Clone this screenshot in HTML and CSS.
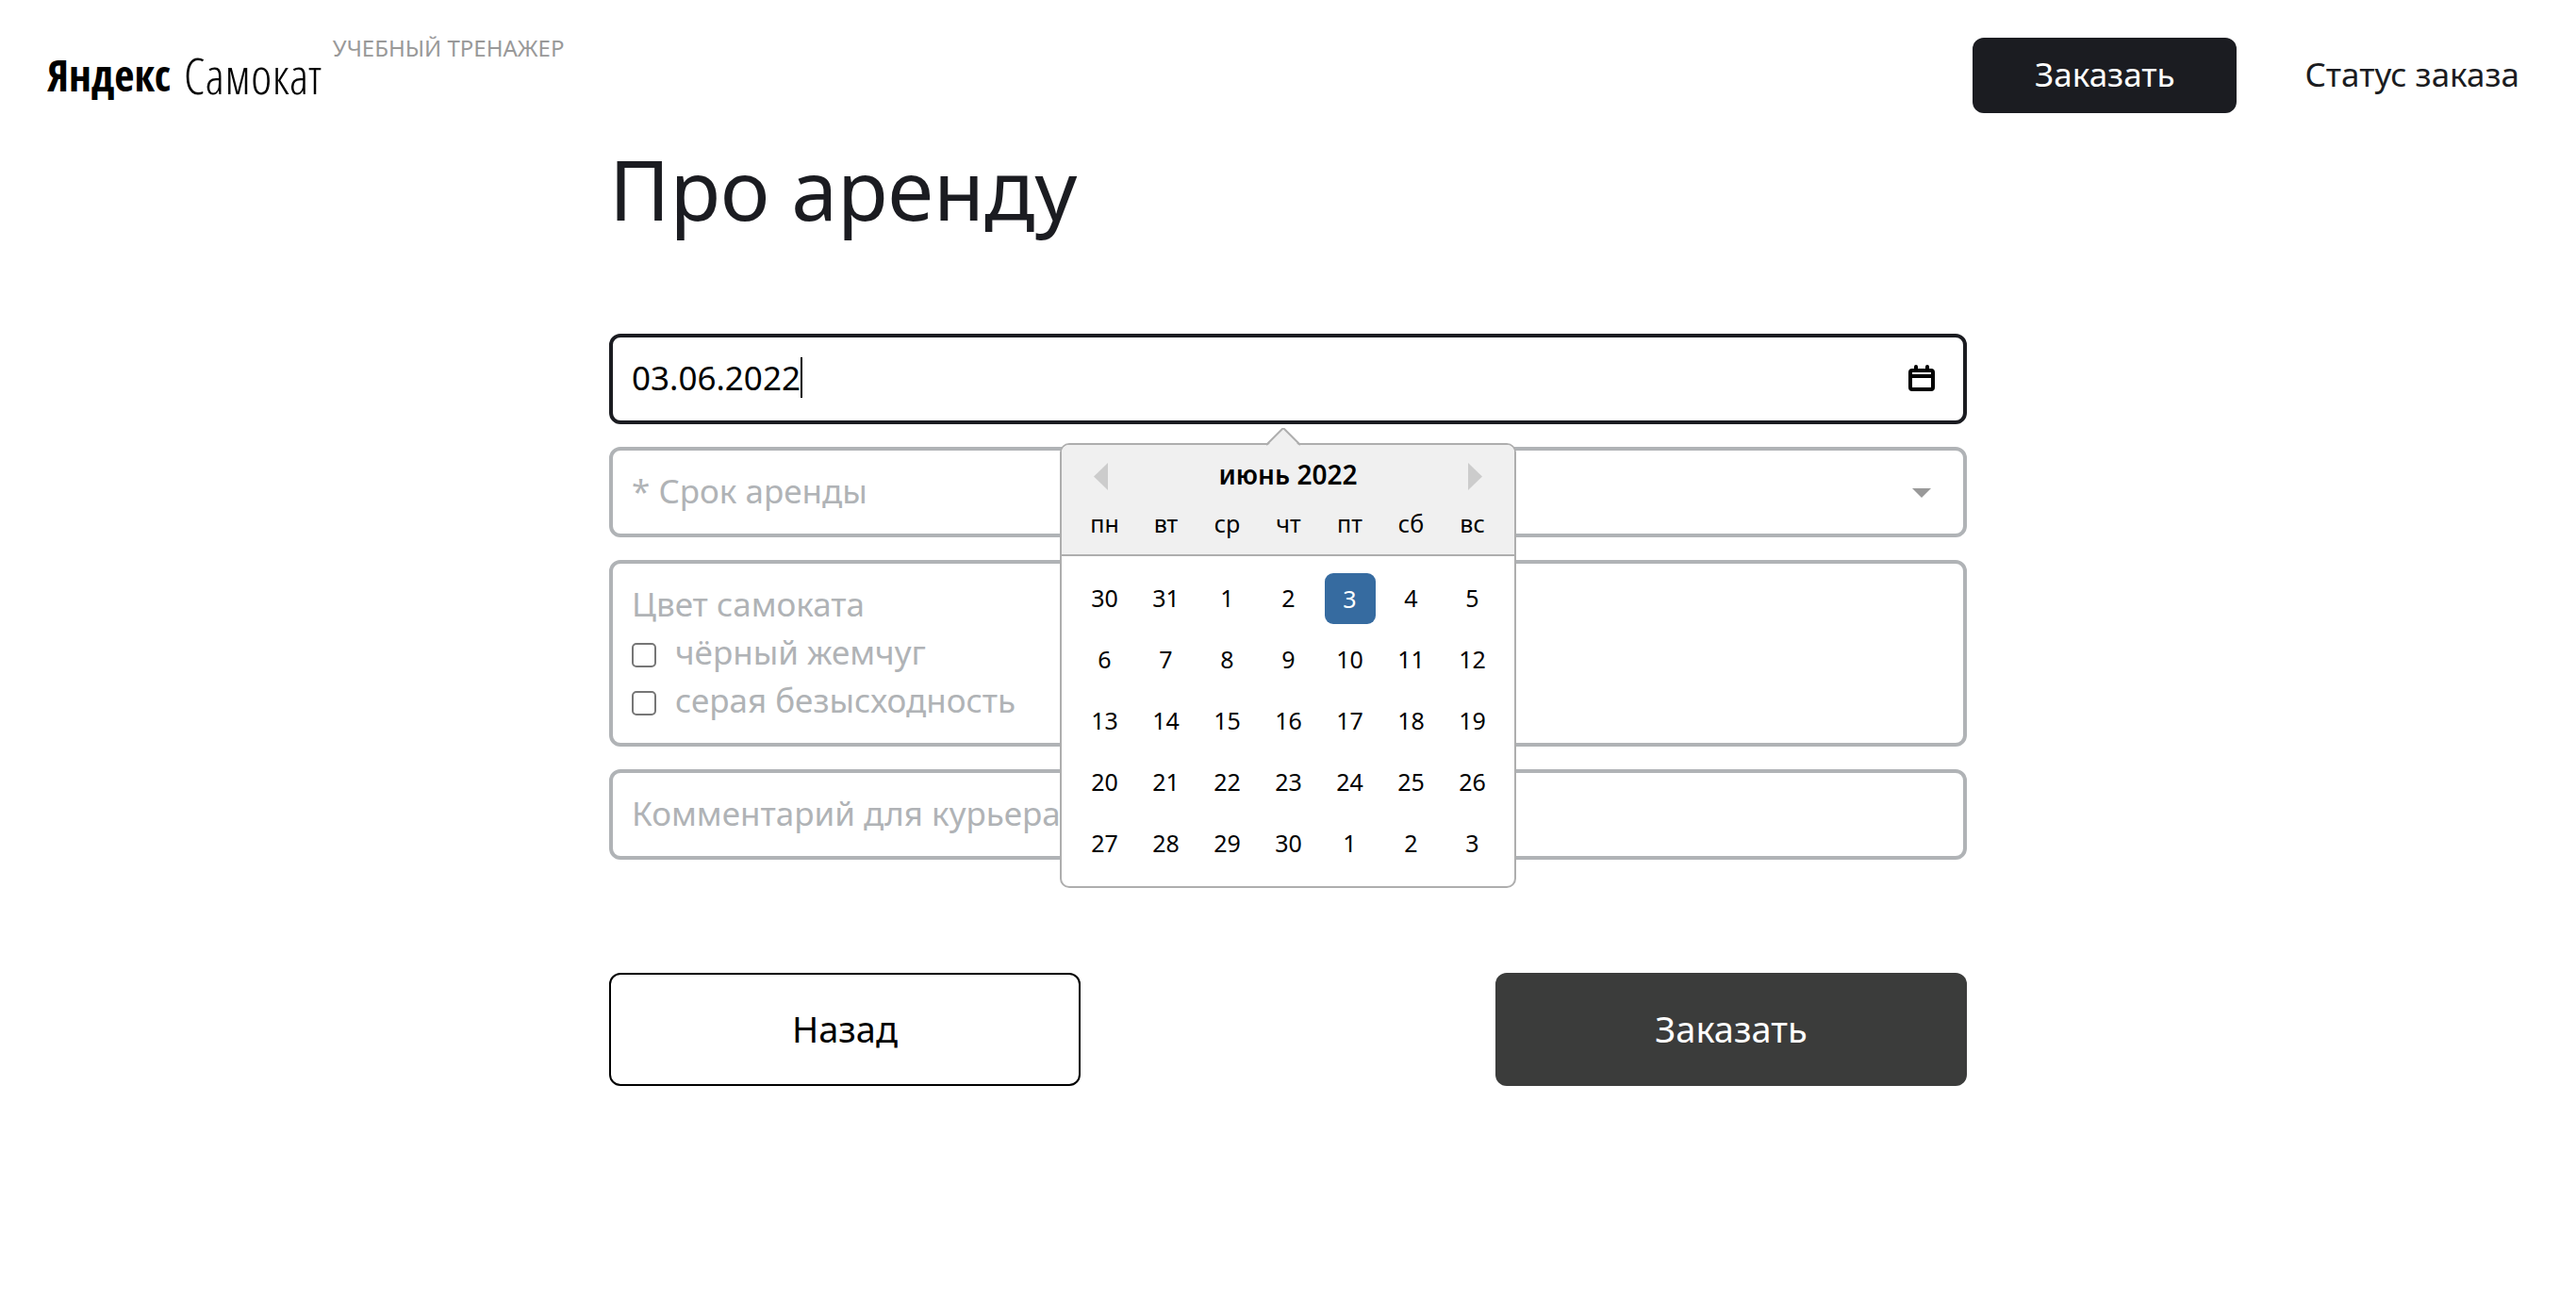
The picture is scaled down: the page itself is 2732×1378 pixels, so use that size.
FILE: index.html
```html
<!DOCTYPE html>
<html lang="ru">
<head>
<meta charset="utf-8">
<meta name="viewport" content="width=device-width, initial-scale=1">
<title>Яндекс Самокат</title>
<link rel="stylesheet" href="styles.css">
</head>
<body>
<header class="header">
  <div class="brand">
    <a class="logo" href="#"><span class="logo-main">Яндекс</span><span class="logo-sub">Самокат</span></a>
    <span class="disclaimer">УЧЕБНЫЙ ТРЕНАЖЕР</span>
  </div>
  <nav class="nav">
    <button class="nav-order" type="button">Заказать</button>
    <a class="nav-status" href="#">Статус заказа</a>
  </nav>
</header>
<main class="order">
  <h1 class="title">Про аренду</h1>
  <form class="form">
    <div class="field field-active">
      <input class="control control-date" type="text" value="03.06.2022" aria-label="Когда привезти самокат">
      <span class="caret"></span>
      <svg class="icon-calendar" viewBox="0 0 28 28" aria-hidden="true">
        <rect x="2" y="6" width="24" height="20" rx="2" fill="none" stroke="#000" stroke-width="4"/>
        <path d="M2 12H26" stroke="#000" stroke-width="4"/>
        <path d="M8 2V6M20 2V6" stroke="#000" stroke-width="4" stroke-linecap="round"/>
      </svg>
      <div class="picker">
        <svg class="picker-arrow" viewBox="0 0 36 20" aria-hidden="true"><path d="M0 20L18 1L36 20Z" fill="#f0f0f0"/><path d="M0 18L17 1Q18 0 19 1L36 18" fill="none" stroke="#aeaeae" stroke-width="2"/></svg>
        <div class="picker-head">
          <button class="picker-nav" type="button" aria-label="Предыдущий месяц"><svg viewBox="0 0 15 29"><path d="M15 0V29L0 14.500Z"/></svg></button>
          <span class="picker-month">июнь 2022</span>
          <button class="picker-nav" type="button" aria-label="Следующий месяц"><svg viewBox="0 0 15 29"><path d="M0 0V29L15 14.500Z"/></svg></button>
        </div>
        <table class="days">
          <thead><tr><th>пн</th><th>вт</th><th>ср</th><th>чт</th><th>пт</th><th>сб</th><th>вс</th></tr></thead>
          <tbody>
            <tr><td>30</td><td>31</td><td>1</td><td>2</td><td><span class="selected">3</span></td><td>4</td><td>5</td></tr>
            <tr><td>6</td><td>7</td><td>8</td><td>9</td><td>10</td><td>11</td><td>12</td></tr>
            <tr><td>13</td><td>14</td><td>15</td><td>16</td><td>17</td><td>18</td><td>19</td></tr>
            <tr><td>20</td><td>21</td><td>22</td><td>23</td><td>24</td><td>25</td><td>26</td></tr>
            <tr><td>27</td><td>28</td><td>29</td><td>30</td><td>1</td><td>2</td><td>3</td></tr>
          </tbody>
        </table>
      </div>
    </div>
    <div class="field">
      <select class="control" aria-label="Срок аренды"><option>* Срок аренды</option></select>
      <svg class="icon-arrow" viewBox="0 0 20 10" aria-hidden="true"><path d="M0 0H20L10 10Z" fill="#999"/></svg>
    </div>
    <fieldset class="field colors">
      <span class="colors-title">Цвет самоката</span>
      <label class="check"><input class="box" type="checkbox">чёрный жемчуг</label>
      <label class="check"><input class="box" type="checkbox">серая безысходность</label>
    </fieldset>
    <div class="field">
      <input class="control" type="text" placeholder="Комментарий для курьера" aria-label="Комментарий для курьера">
    </div>
    <div class="actions">
      <button class="btn btn-back" type="button">Назад</button>
      <button class="btn btn-next" type="button">Заказать</button>
    </div>
  </form>
</main>
</body>
</html>
```
FILE: styles.css
```css
* { box-sizing: border-box; }
body {
  margin: 0;
  background: #fff;
  color: #1b1c21;
  font-family: "Noto Sans", sans-serif;
  font-size: 35px;
  line-height: 51px;
}
button, input, select { font: inherit; color: inherit; margin: 0; }
a { color: inherit; text-decoration: none; }

.header {
  display: flex;
  justify-content: space-between;
  padding: 40px 60px 0 50px;
}
.brand { display: flex; gap: 12px; }
.logo {
  display: flex;
  gap: 14px;
  height: 80px;
  color: #000;
  line-height: 78px;
  white-space: nowrap;
}
.logo-main { font-family: "Open Sans Condensed", "Noto Sans ExtraCondensed", sans-serif; font-size: 46px; font-weight: 600; }
.logo-sub { font-family: "Open Sans Condensed Light", "Noto Sans ExtraCondensed", sans-serif; font-size: 54px; font-weight: 300; }
.disclaimer { color: #999; font-size: 24px; line-height: 22px; }
.nav { display: flex; align-items: center; gap: 72px; }
.nav-order {
  width: 280px;
  height: 80px;
  padding: 0 0 3px;
  border: 0;
  border-radius: 12px;
  background: #1b1c21;
  color: #fff;
}
.nav-status { padding-bottom: 3px; }

.order { max-width: 1440px; margin: 0 auto; padding-top: 20px; }
.title { margin: 0 0 94px; font-size: 88px; font-weight: 400; line-height: 120px; }
.form { display: flex; flex-direction: column; gap: 24px; }
.field {
  position: relative;
  display: flex;
  align-items: center;
  min-height: 96px;
  margin: 0;
  padding: 0 30px 3px 20px;
  border: 4px solid #b0b3b6;
  border-radius: 12px;
  color: #b0b3b6;
}
.field-active { border-color: #1b1c21; color: #000; }
.control {
  flex: 1;
  height: 60px;
  padding: 0;
  border: 0;
  outline: 0;
  background: none;
  appearance: none;
}
.control::placeholder { color: #b0b3b6; opacity: 1; }
.control-date { flex: none; field-sizing: content; }
.caret { width: 2px; height: 43px; background: #000; }
.icon-calendar { width: 28px; height: 28px; margin-left: auto; }
.icon-arrow { width: 20px; height: 10px; margin: 5px 4px 0 0; }

.colors { flex-direction: column; align-items: flex-start; padding-top: 17px; padding-bottom: 18px; min-height: 198px; }
.check { display: flex; align-items: center; gap: 20px; }
.box {
  width: 26px;
  height: 26px;
  margin-top: 6px;
  border: 2px solid #767676;
  border-radius: 5px;
  background: #fff;
  appearance: none;
}

.picker {
  position: absolute;
  z-index: 1;
  top: 112px;
  left: 50%;
  width: 484px;
  transform: translateX(-50%);
  border: 2px solid #aeaeae;
  border-radius: 10px;
  background: #fff;
  color: #000;
  font-size: 25px;
}
.picker-arrow { position: absolute; top: -18px; left: 217px; width: 36px; height: 20px; }
.picker-head {
  display: flex;
  align-items: center;
  justify-content: space-between;
  padding: 5px 34px 0;
  height: 58px;
  border-radius: 8px 8px 0 0;
  background: #f0f0f0;
}
.picker-month { font-size: 28px; font-weight: 600; }
.picker-nav { display: flex; padding: 3px 0 0; border: 0; background: none; }
.picker-nav svg { width: 15px; height: 29px; fill: #ccc; }
.days { width: 100%; border-collapse: separate; border-spacing: 0; table-layout: fixed; }
.days thead, .days tbody { display: block; padding: 0 12px 0 13px; }
.days tr { display: grid; grid-template-columns: repeat(7, 1fr); }
.days thead { background: #f0f0f0; border-bottom: 2px solid #aeaeae; }
.days th { padding: 0 0 7px; font-weight: 400; }
.days tbody { padding-top: 12px; padding-bottom: 13px; }
.days td { display: grid; place-items: center; height: 65px; padding: 0; }
.selected {
  width: 54px;
  height: 54px;
  border-radius: 9px;
  background: #366ba0;
  color: #fff;
  line-height: 54px;
  text-align: center;
}

.actions { display: flex; justify-content: space-between; margin-top: 96px; }
.btn { width: 500px; height: 120px; padding: 0 0 2px; border-radius: 12px; font-size: 38px; }
.btn-back { border: 2px solid #000; background: #fff; color: #000; }
.btn-next { border: 0; background: #3b3c3b; color: #fff; }
```
